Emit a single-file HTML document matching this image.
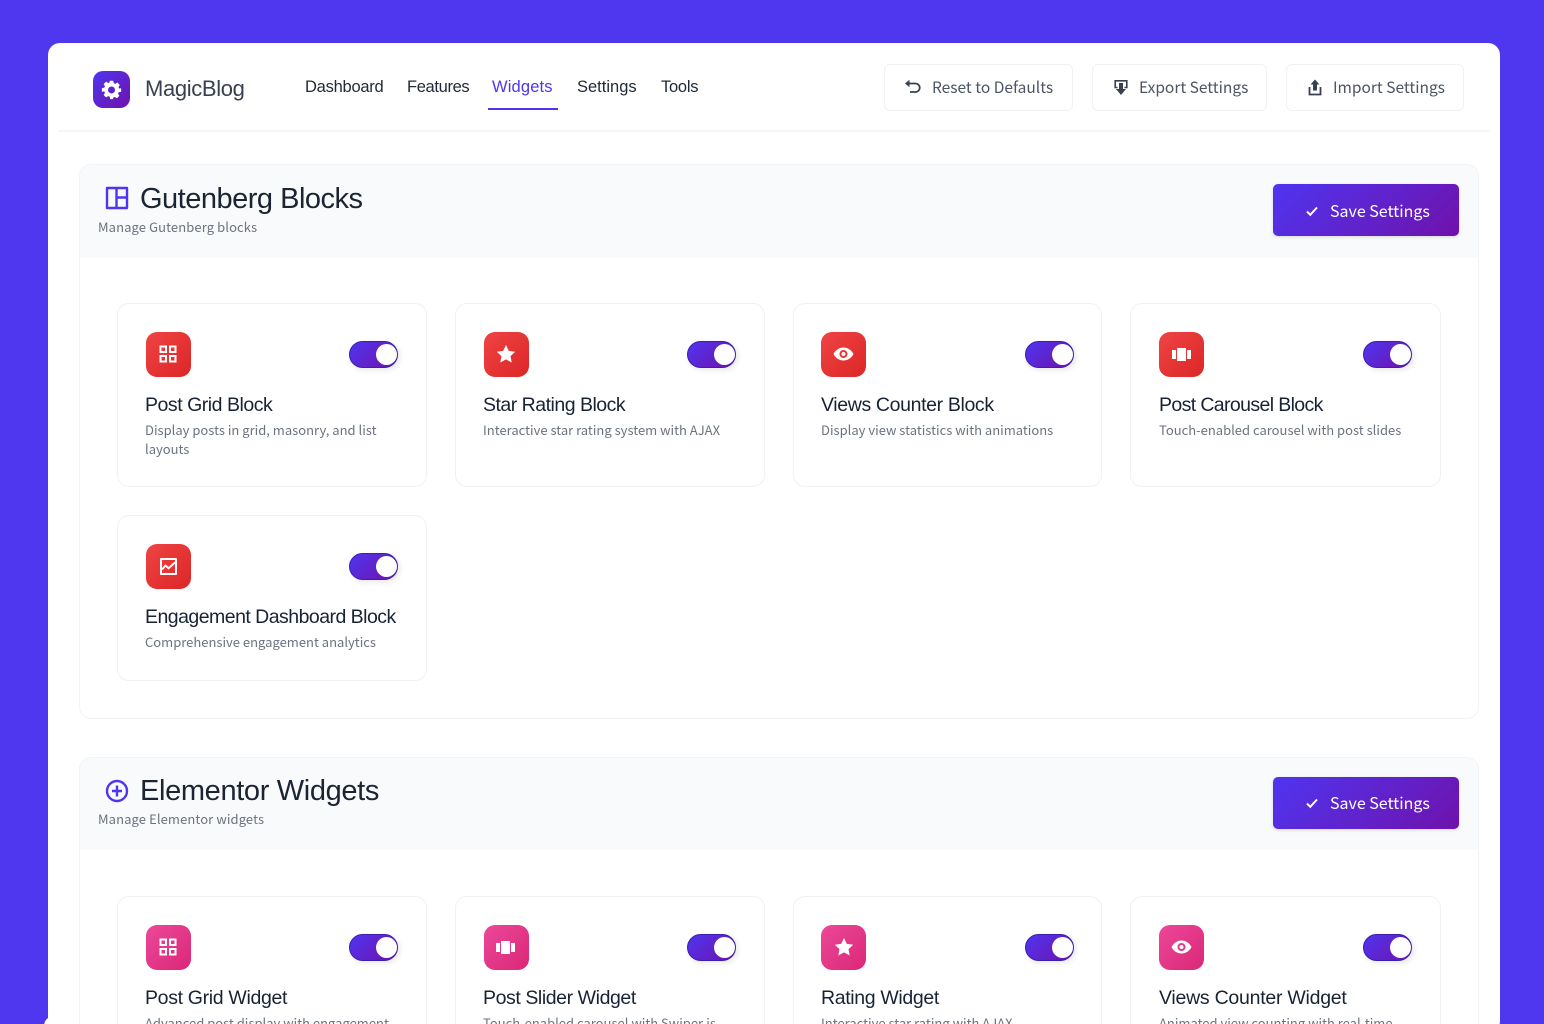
<!DOCTYPE html>
<html lang="en"><head><meta charset="utf-8"><title>MagicBlog</title>
<style>
*{box-sizing:border-box}
html,body{margin:0;padding:0;width:1544px;height:1024px;overflow:hidden;background:#4e37ee;font-family:"Liberation Sans",sans-serif}
#w{position:relative;width:1544px;height:1024px;overflow:hidden;background:#4e37ee}
.a{position:absolute}
.t{position:absolute;white-space:nowrap;line-height:1}
.n{font-family:"Noto Sans CJK JP","Liberation Sans",sans-serif}
.nav{font-size:16.5px;color:#1f2937;top:79px;letter-spacing:-.25px}
.btn{position:absolute;top:64px;height:47px;background:#fff;border:1px solid #f0f1f3;border-radius:6px}
.bt{font-size:15.5px;color:#4b5563;top:80px}
.sec{position:absolute;left:79px;width:1400px;border:1px solid #f1f3f5;border-radius:12px;background:#fff;overflow:hidden}
.hd{position:absolute;left:0;top:0;width:100%;height:93px;background:#f9fafb}
.h2{font-size:29px;color:#1a2433;letter-spacing:-.5px}
.sub{font-size:13px;color:#6b7280;letter-spacing:.1px}
.save{position:absolute;left:1273px;width:186px;height:52px;border-radius:5px;background:linear-gradient(135deg,#4f35f0,#6f12ab);box-shadow:0 1px 3px rgba(0,0,0,.15)}
.st{font-size:16px;color:#fff;left:1330px}
.card{position:absolute;width:310px;background:#fff;border:1px solid #f0f1f3;border-radius:12px}
.ic{position:absolute;width:45px;height:45px;border-radius:11px}
.r{background:linear-gradient(135deg,#ef4444,#dc2626)}
.p{background:linear-gradient(135deg,#ec4899,#db2777)}
.tg{position:absolute;width:49px;height:27px;border-radius:14px;background:linear-gradient(135deg,#4f35f0,#6f12ab);border:1.500px solid #3a1fb0;box-shadow:2px 2px 6px rgba(0,0,0,.1)}
.tg:after{content:"";position:absolute;right:0;top:1.500px;width:21px;height:21px;border-radius:50%;background:#fff}
.ct{font-size:19.500px;color:#172233}
.cd{font-size:13px;color:#6b7280}
svg{position:absolute;overflow:visible}
</style></head><body><div id="w">

<div class="a" style="left:48px;top:43px;width:1452px;height:990px;background:#fff;border-radius:12px"></div>
<div class="a" style="left:44px;top:1016px;width:20px;height:20px;background:#fff;border-radius:10px"></div>

<div class="a" style="left:93px;top:71px;width:37px;height:37px;border-radius:10px;background:linear-gradient(135deg,#4f35f0,#6f12ab)"></div>
<svg style="left:101px;top:79px" width="21" height="21" viewBox="0 0 24 24"><path fill="#fff" fill-rule="evenodd" d="M10 2h4l.6 2.800 1.700.7 2.400-1.500 2.800 2.800-1.500 2.400.7 1.700L23 10.500v4l-2.800.6-.7 1.700 1.500 2.400-2.800 2.800-2.400-1.500-1.700.7L13.500 23h-3l-.6-2.800-1.700-.7-2.400 1.500-2.800-2.800 1.500-2.400-.7-1.700L1 14.500v-4l2.800-.6.7-1.700L3 5.800 5.800 3l2.400 1.500 1.700-.7zM12 8.500a4 4 0 1 0 0 8 4 4 0 0 0 0-8z"/></svg>
<div class="t" style="left:145px;top:78px;font-size:22px;color:#374151;letter-spacing:-.35px">MagicBlog</div>

<div class="t nav" style="left:305px">Dashboard</div>
<div class="t nav" style="left:407px;letter-spacing:-.35px">Features</div>
<div class="t nav" style="left:492px;color:#4f35f0;letter-spacing:.15px">Widgets</div>
<div class="t nav" style="left:577px;letter-spacing:0">Settings</div>
<div class="t nav" style="left:661px">Tools</div>
<div class="a" style="left:488px;top:108px;width:70px;height:2px;background:#4f35f0"></div>
<div class="a" style="left:58px;top:130px;width:1432px;height:2px;background:#f5f6f7"></div>

<div class="btn" style="left:884px;width:189px"></div>
<div class="btn" style="left:1092px;width:175px"></div>
<div class="btn" style="left:1286px;width:178px"></div>
<svg style="left:904px;top:79px" width="17" height="17" viewBox="0 0 17 17"><path fill="none" stroke="#374151" stroke-width="1.800" d="M3 4.500h8.500a3.700 3.700 0 0 1 0 8.500H6"/><path fill="#374151" d="M5.500 0.800v7.500L1 4.500z"/></svg>
<svg style="left:1113px;top:79px" width="16" height="17" viewBox="0 0 16 17"><path fill="none" stroke="#374151" stroke-width="1.600" d="M4.500 8.500H2.200V1.800h11.600v6.700h-2.300"/><path fill="#374151" d="M6 4h4v6h3l-5 6-5-6h3z"/></svg>
<svg style="left:1307px;top:79px" width="16" height="17" viewBox="0 0 16 17"><path fill="#374151" d="M8 .5l4.500 5H10v6H6v-6H3.500z"/><path fill="none" stroke="#374151" stroke-width="1.800" d="M2.500 8v7.500h11V8"/></svg>
<div class="t bt n" style="left:932px">Reset to Defaults</div>
<div class="t bt n" style="left:1139px">Export Settings</div>
<div class="t bt n" style="left:1333px">Import Settings</div>

<div class="sec" style="top:164px;height:555px"><div class="hd"></div></div>
<svg style="left:105px;top:186px" width="24" height="24" viewBox="0 0 24 24"><path fill="none" stroke="#4f35f0" stroke-width="2.400" stroke-linejoin="round" d="M2 2h20v20H2zM11.500 2v20M11.500 11.500H22"/></svg>
<div class="t h2" style="left:140px;top:185px">Gutenberg Blocks</div>
<div class="t sub n" style="left:98px;top:220px">Manage Gutenberg blocks</div>
<div class="save" style="top:184px"></div>
<svg style="left:1305px;top:204px" width="14" height="14" viewBox="0 0 14 14"><path fill="none" stroke="#fff" stroke-width="2" d="M2 7.500l3.300 3.300L12 3.500"/></svg>
<div class="t st n" style="top:202px">Save Settings</div>

<div class="card" style="left:117px;top:303px;height:184px"></div>
<div class="card" style="left:455px;top:303px;height:184px"></div>
<div class="card" style="left:793px;top:303px;height:184px;width:309px"></div>
<div class="card" style="left:1130px;top:303px;height:184px;width:311px"></div>
<div class="card" style="left:117px;top:515px;height:166px"></div>

<div class="ic r" style="left:145.500px;top:332px"></div>
<svg style="left:159px;top:345px" width="18" height="18" viewBox="0 0 18 18"><path fill="none" stroke="#fff" stroke-width="2" d="M1.500 1.500h5.500v5.500H1.500zM11 1.500h5.500v5.500H11zM1.500 11h5.500v5.500H1.500zM11 11h5.500v5.500H11z"/></svg>
<div class="tg" style="left:349px;top:341px"></div>
<div class="t ct" style="left:145px;top:396px;letter-spacing:-.47px">Post Grid Block</div>
<div class="t cd n" style="left:145px;top:423px">Display posts in grid, masonry, and list</div>
<div class="t cd n" style="left:145px;top:442px">layouts</div>

<div class="ic r" style="left:483.500px;top:332px"></div>
<svg style="left:496px;top:344px" width="20" height="20" viewBox="0 0 20 20"><path fill="#fff" d="M10 1l2.800 5.900 6.400.8-4.700 4.400 1.200 6.400L10 15.400l-5.700 3.100 1.200-6.400L.8 7.700l6.400-.8z"/></svg>
<div class="tg" style="left:687px;top:341px"></div>
<div class="t ct" style="left:483px;top:396px;letter-spacing:-.5px">Star Rating Block</div>
<div class="t cd n" style="left:483px;top:423px">Interactive star rating system with AJAX</div>

<div class="ic r" style="left:821px;top:332px"></div>
<svg style="left:833px;top:347px" width="21" height="15" viewBox="0 0 21 15"><path fill="#fff" fill-rule="evenodd" d="M10.500 .5C15 .5 18.800 3.500 20.500 7 18.800 10.500 15 13.500 10.500 13.500S2.200 10.500 .5 7C2.200 3.500 6 .5 10.500 .5zM10.500 3a4 4 0 1 0 0 8 4 4 0 0 0 0-8zM10.500 5a2 2 0 1 1 0 4 2 2 0 0 1 0-4z"/></svg>
<div class="tg" style="left:1025px;top:341px"></div>
<div class="t ct" style="left:821px;top:396px;letter-spacing:-.36px">Views Counter Block</div>
<div class="t cd n" style="left:821px;top:423px">Display view statistics with animations</div>

<div class="ic r" style="left:1159px;top:332px"></div>
<svg style="left:1172px;top:347px" width="19" height="15" viewBox="0 0 19 15"><path fill="#fff" d="M0 3h4v9H0zM5 1h9v13H5zM15 3h4v9h-4z"/></svg>
<div class="tg" style="left:1363px;top:341px"></div>
<div class="t ct" style="left:1159px;top:396px;letter-spacing:-.62px">Post Carousel Block</div>
<div class="t cd n" style="left:1159px;top:423px">Touch-enabled carousel with post slides</div>

<div class="ic r" style="left:145.500px;top:544px"></div>
<svg style="left:159px;top:557px" width="19" height="19" viewBox="0 0 19 19"><path fill="none" stroke="#fff" stroke-width="2" stroke-linejoin="round" d="M2 2h15v15H2z"/><path fill="none" stroke="#fff" stroke-width="2" d="M3 12.500l3.500-4 3 2.800L16 5.500"/></svg>
<div class="tg" style="left:349px;top:553px"></div>
<div class="t ct" style="left:145px;top:608px;letter-spacing:-.53px">Engagement Dashboard Block</div>
<div class="t cd n" style="left:145px;top:635px">Comprehensive engagement analytics</div>

<div class="sec" style="top:757px;height:400px"><div class="hd" style="height:92px"></div></div>
<svg style="left:105px;top:779px" width="24" height="24" viewBox="0 0 24 24"><circle cx="12" cy="12" r="10" fill="none" stroke="#4f35f0" stroke-width="2.400"/><path fill="none" stroke="#4f35f0" stroke-width="2.400" d="M12 6.500v11M7 12h10"/></svg>
<div class="t h2" style="left:140px;top:777px;letter-spacing:-.35px">Elementor Widgets</div>
<div class="t sub n" style="left:98px;top:812px">Manage Elementor widgets</div>
<div class="save" style="top:777px"></div>
<svg style="left:1305px;top:796px" width="14" height="14" viewBox="0 0 14 14"><path fill="none" stroke="#fff" stroke-width="2" d="M2 7.500l3.300 3.300L12 3.500"/></svg>
<div class="t st n" style="top:794px">Save Settings</div>

<div class="card" style="left:117px;top:896px;height:200px"></div>
<div class="card" style="left:455px;top:896px;height:200px"></div>
<div class="card" style="left:793px;top:896px;height:200px;width:309px"></div>
<div class="card" style="left:1130px;top:896px;height:200px;width:311px"></div>

<div class="ic p" style="left:145.500px;top:925px"></div>
<svg style="left:159px;top:938px" width="18" height="18" viewBox="0 0 18 18"><path fill="none" stroke="#fff" stroke-width="2" d="M1.500 1.500h5.500v5.500H1.500zM11 1.500h5.500v5.500H11zM1.500 11h5.500v5.500H1.500zM11 11h5.500v5.500H11z"/></svg>
<div class="tg" style="left:349px;top:934px"></div>
<div class="t ct" style="left:145px;top:989px;letter-spacing:-.33px">Post Grid Widget</div>
<div class="t cd n" style="left:145px;top:1016px">Advanced post display with engagement</div>

<div class="ic p" style="left:483.500px;top:925px"></div>
<svg style="left:496px;top:940px" width="19" height="15" viewBox="0 0 19 15"><path fill="#fff" d="M0 3h4v9H0zM5 1h9v13H5zM15 3h4v9h-4z"/></svg>
<div class="tg" style="left:687px;top:934px"></div>
<div class="t ct" style="left:483px;top:989px;letter-spacing:-.42px">Post Slider Widget</div>
<div class="t cd n" style="left:483px;top:1016px">Touch-enabled carousel with Swiper.js</div>

<div class="ic p" style="left:821px;top:925px"></div>
<svg style="left:834px;top:937px" width="20" height="20" viewBox="0 0 20 20"><path fill="#fff" d="M10 1l2.800 5.900 6.400.8-4.700 4.400 1.200 6.400L10 15.400l-5.700 3.100 1.200-6.400L.8 7.700l6.400-.8z"/></svg>
<div class="tg" style="left:1025px;top:934px"></div>
<div class="t ct" style="left:821px;top:989px;letter-spacing:-.35px">Rating Widget</div>
<div class="t cd n" style="left:821px;top:1016px">Interactive star rating with AJAX</div>

<div class="ic p" style="left:1159px;top:925px"></div>
<svg style="left:1171px;top:940px" width="21" height="15" viewBox="0 0 21 15"><path fill="#fff" fill-rule="evenodd" d="M10.500 .5C15 .5 18.800 3.500 20.500 7 18.800 10.500 15 13.500 10.500 13.500S2.200 10.500 .5 7C2.200 3.500 6 .5 10.500 .5zM10.500 3a4 4 0 1 0 0 8 4 4 0 0 0 0-8zM10.500 5a2 2 0 1 1 0 4 2 2 0 0 1 0-4z"/></svg>
<div class="tg" style="left:1363px;top:934px"></div>
<div class="t ct" style="left:1159px;top:989px;letter-spacing:-.25px">Views Counter Widget</div>
<div class="t cd n" style="left:1159px;top:1016px">Animated view counting with real-time</div>

</div></body></html>
